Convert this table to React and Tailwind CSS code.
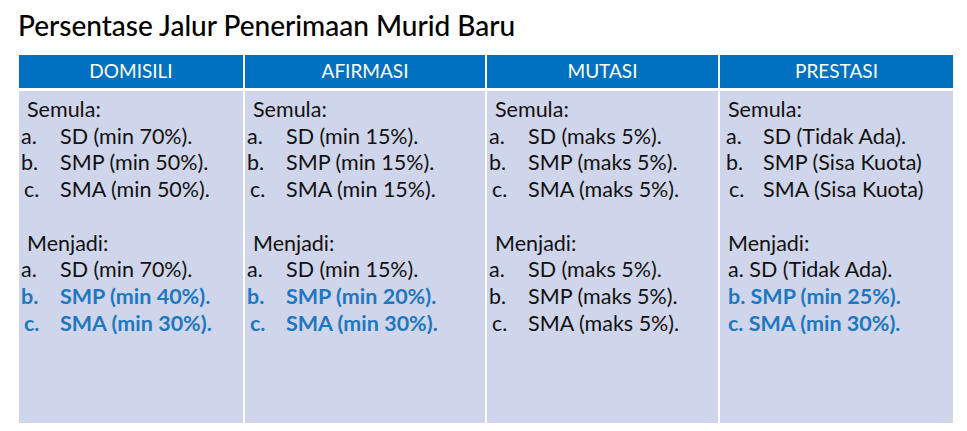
const columns = [
  {
    title: 'DOMISILI',
    before: ['SD (min 70%).', 'SMP (min 50%).', 'SMA (min 50%).'],
    after: [
      { text: 'SD (min 70%).' },
      { text: 'SMP (min 40%).', blue: true },
      { text: 'SMA (min 30%).', blue: true },
    ],
  },
  {
    title: 'AFIRMASI',
    before: ['SD (min 15%).', 'SMP (min 15%).', 'SMA (min 15%).'],
    after: [
      { text: 'SD (min 15%).' },
      { text: 'SMP (min 20%).', blue: true },
      { text: 'SMA (min 30%).', blue: true },
    ],
  },
  {
    title: 'MUTASI',
    before: ['SD (maks 5%).', 'SMP (maks 5%).', 'SMA (maks 5%).'],
    after: [
      { text: 'SD (maks 5%).' },
      { text: 'SMP (maks 5%).' },
      { text: 'SMA (maks 5%).' },
    ],
  },
]

const labels = ['a.', 'b.', 'c.']

function Item({ label, text, blue }) {
  return (
    <div className={blue ? 'flex text-[#1f77c0] font-bold' : 'flex'}>
      <span className={label === 'c.' ? 'w-[41px] pl-[5px] shrink-0' : 'w-[41px] pl-[2px] shrink-0'}>
        {label}
      </span>
      <span>{text}</span>
    </div>
  )
}

function Cell({ col }) {
  return (
    <div className="h-full bg-[#cfd5ea] pt-[5px] text-[#111]">
      <div className="pl-[8px]">Semula:</div>
      {col.before.map((t, i) => (
        <Item key={i} label={labels[i]} text={t} />
      ))}
      <div className="h-[26.7px]" />
      <div className="pl-[8px]">Menjadi:</div>
      {col.after.map((it, i) => (
        <Item key={i} label={labels[i]} text={it.text} blue={it.blue} />
      ))}
    </div>
  )
}

export default function App() {
  return (
    <div
      className="w-[967px] h-[431px] bg-white overflow-hidden"
      style={{ fontFamily: 'Lato, "Open Sans", sans-serif' }}
    >
      <h1 className="pl-[18px] pt-[8px] text-[28px] leading-[34px] font-medium text-black">
        Persentase Jalur Penerimaan Murid Baru
      </h1>

      <div className="ml-[19px] mt-[13px] w-[934px] grid grid-cols-[224px_240px_231px_233px] gap-x-[2px] gap-y-[3px]">
        {columns.map((c) => (
          <div key={c.title} className="bg-[#0070c0] h-[33px] flex items-center justify-center text-white text-[19px]">
            {c.title}
          </div>
        ))}
        <div className="bg-[#0070c0] h-[33px] flex items-center justify-center text-white text-[19px]">
          PRESTASI
        </div>

        {columns.map((c) => (
          <div key={c.title} className="h-[332px] text-[21.5px] leading-[26.7px]">
            <Cell col={c} />
          </div>
        ))}

        <div className="h-[332px] bg-[#cfd5ea] pt-[5px] pl-[8px] text-[21.5px] leading-[26.7px] text-[#111]">
          <div>Semula:</div>
          <div className="flex -ml-[2px]">
            <span className="w-[37px] shrink-0">a.</span>
            <span>SD (Tidak Ada).</span>
          </div>
          <div className="flex -ml-[2px]">
            <span className="w-[37px] shrink-0">b.</span>
            <span>SMP (Sisa Kuota)</span>
          </div>
          <div className="flex -ml-[2px]">
            <span className="w-[37px] shrink-0 pl-[3px]">c.</span>
            <span>SMA (Sisa Kuota)</span>
          </div>
          <div className="h-[26.7px]" />
          <div>Menjadi:</div>
          <div>a. SD (Tidak Ada).</div>
          <div className="text-[#1f77c0] font-bold">b. SMP (min 25%).</div>
          <div className="text-[#1f77c0] font-bold">c. SMA (min 30%).</div>
        </div>
      </div>
    </div>
  )
}
